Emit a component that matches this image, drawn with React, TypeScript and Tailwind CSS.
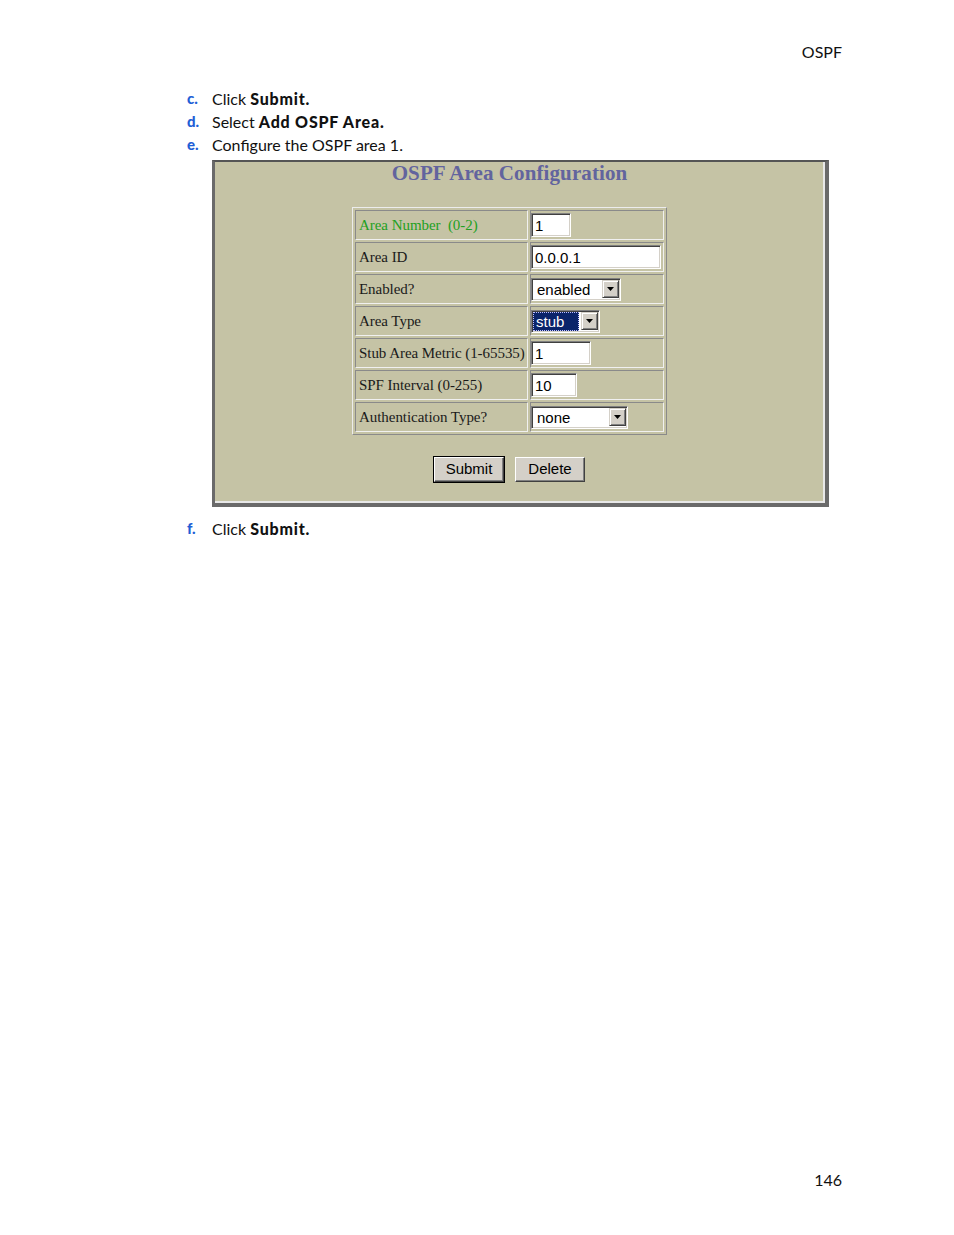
import React from "react";

const doc = "font-['Lato','Liberation_Sans',sans-serif] text-[16px] text-[#111]";
const win = "font-['Liberation_Sans',Arial,sans-serif] text-[15px] text-black";
const serif = "font-['Liberation_Serif','Times_New_Roman',serif] text-[15px] tracking-[-0.05px]";

const inset =
  "border border-t-[#808080] border-l-[#808080] border-b-white border-r-white shadow-[inset_1px_1px_0_#404040,inset_-1px_-1px_0_#d4d0c8]";

function Step({ letter, children }: { letter: string; children: React.ReactNode }) {
  return (
    <div className="flex h-[23px] items-center">
      <span className="w-[25px] text-[15px] font-black text-[#1f5fd6]">{letter}</span>
      <span>{children}</span>
    </div>
  );
}

function Strong({ children }: { children: React.ReactNode }) {
  return <span className="font-black tracking-[0.8px]">{children}</span>;
}

function TextBox({ value, width }: { value: string; width: number }) {
  return (
    <div className={`${inset} ${win} flex h-[24px] items-center bg-white pl-[3px] leading-none`} style={{ width }}>
      {value}
    </div>
  );
}

function Arrow() {
  return (
    <div className="flex h-[18px] w-[17px] items-center justify-center border border-t-[#d4d0c8] border-l-[#d4d0c8] border-b-[#404040] border-r-[#404040] bg-[#d4d0c8] shadow-[inset_1px_1px_0_white,inset_-1px_-1px_0_#808080]">
      <svg width="7" height="4" viewBox="0 0 7 4">
        <path d="M0 0h7L3.5 4z" fill="black" />
      </svg>
    </div>
  );
}

function Combo({ value, width, selected }: { value: string; width: number; selected?: boolean }) {
  return (
    <div className={`${inset} ${win} flex h-[23px] items-center justify-between bg-white p-[1px]`} style={{ width }}>
      {selected ? (
        <span className="flex h-full flex-1 items-center border border-dotted border-[#c0c0ff] bg-[#0a246a] pl-[2px] leading-none text-white">
          {value}
        </span>
      ) : (
        <span className="pl-[4px] leading-none">{value}</span>
      )}
      <div className={selected ? "ml-[2px]" : ""}>
        <Arrow />
      </div>
    </div>
  );
}

function Btn({ label, def, width }: { label: string; def?: boolean; width: number }) {
  return (
    <div className={def ? "border border-black" : "border border-transparent"} style={{ width }}>
      <div
        className={`${win} flex h-[25px] items-center justify-center border border-t-white border-l-white border-b-[#404040] border-r-[#404040] bg-[#d4d0c8] shadow-[inset_-1px_-1px_0_#808080]`}
      >
        {label}
      </div>
    </div>
  );
}

const rows: { label: string; green?: boolean; field: React.ReactNode }[] = [
  { label: "Area Number  (0-2)", green: true, field: <TextBox value="1" width={40} /> },
  { label: "Area ID", field: <TextBox value="0.0.0.1" width={130} /> },
  { label: "Enabled?", field: <Combo value="enabled" width={90} /> },
  { label: "Area Type", field: <Combo value="stub" width={69} selected /> },
  { label: "Stub Area Metric (1-65535)", field: <TextBox value="1" width={60} /> },
  { label: "SPF Interval (0-255)", field: <TextBox value="10" width={46} /> },
  { label: "Authentication Type?", field: <Combo value="none" width={97} /> },
];

export default function App() {
  return (
    <div className={`${doc} min-h-[1235px] w-[954px] bg-white`}>
      <div className="flex justify-end pr-[112px] pt-[40px]">
        <span className="leading-[23px]">OSPF</span>
      </div>

      <div className="ml-[187px] mt-[24px]">
        <Step letter="c.">
          Click <Strong>Submit.</Strong>
        </Step>
        <Step letter="d.">
          Select <Strong>Add OSPF Area.</Strong>
        </Step>
        <Step letter="e.">Configure the OSPF area 1.</Step>
      </div>

      <div className="ml-[212px] mt-[4px] w-[617px] border-b-[4px] border-l-[3px] border-r-[4px] border-t-2 border-b-[#6a6a6a] border-l-[#6a6a6a] border-r-[#6a6a6a] border-t-[#555]">
        <div className="border-b-2 border-r-2 border-b-[#e8e8e8] border-r-[#e8e8e8] bg-[#c5c3a5]">
          <div className="flex flex-col items-center pb-[18px] pr-[19px]">
            <div className="h-[24px] font-['Liberation_Serif','Times_New_Roman',serif] text-[21px] font-bold tracking-[0.1px] leading-[22px] text-[#62649e]">
              OSPF Area Configuration
            </div>
            <table className="mt-[21px] border-separate border-spacing-[2px] border border-b-[#8a8a8a] border-l-[#ececec] border-r-[#8a8a8a] border-t-[#ececec]">
              <tbody>
                {rows.map((r) => (
                  <tr key={r.label}>
                    <td
                      className={`h-[30px] w-[173px] whitespace-pre border border-b-[#f0f0f0] border-l-[#8a8a8a] border-r-[#f0f0f0] border-t-[#8a8a8a] pl-[3px] pr-0 ${serif} ${r.green ? "text-[#22a022]" : "text-[#1a1a1a]"}`}
                    >
                      {r.label}
                    </td>
                    <td className="h-[30px] w-[134px] border border-b-[#f0f0f0] border-l-[#8a8a8a] border-r-[#f0f0f0] border-t-[#8a8a8a] p-0">
                      {r.field}
                    </td>
                  </tr>
                ))}
              </tbody>
            </table>
            <div className="mt-[21px] flex gap-[9px]">
              <Btn label="Submit" def width={72} />
              <Btn label="Delete" width={72} />
            </div>
          </div>
        </div>
      </div>

      <div className="ml-[187px] mt-[10px]">
        <Step letter="f.">
          Click <Strong>Submit.</Strong>
        </Step>
      </div>

      <div className="mt-[628px] flex justify-end pr-[112px]">
        <span className="leading-[23px]">146</span>
      </div>
    </div>
  );
}
